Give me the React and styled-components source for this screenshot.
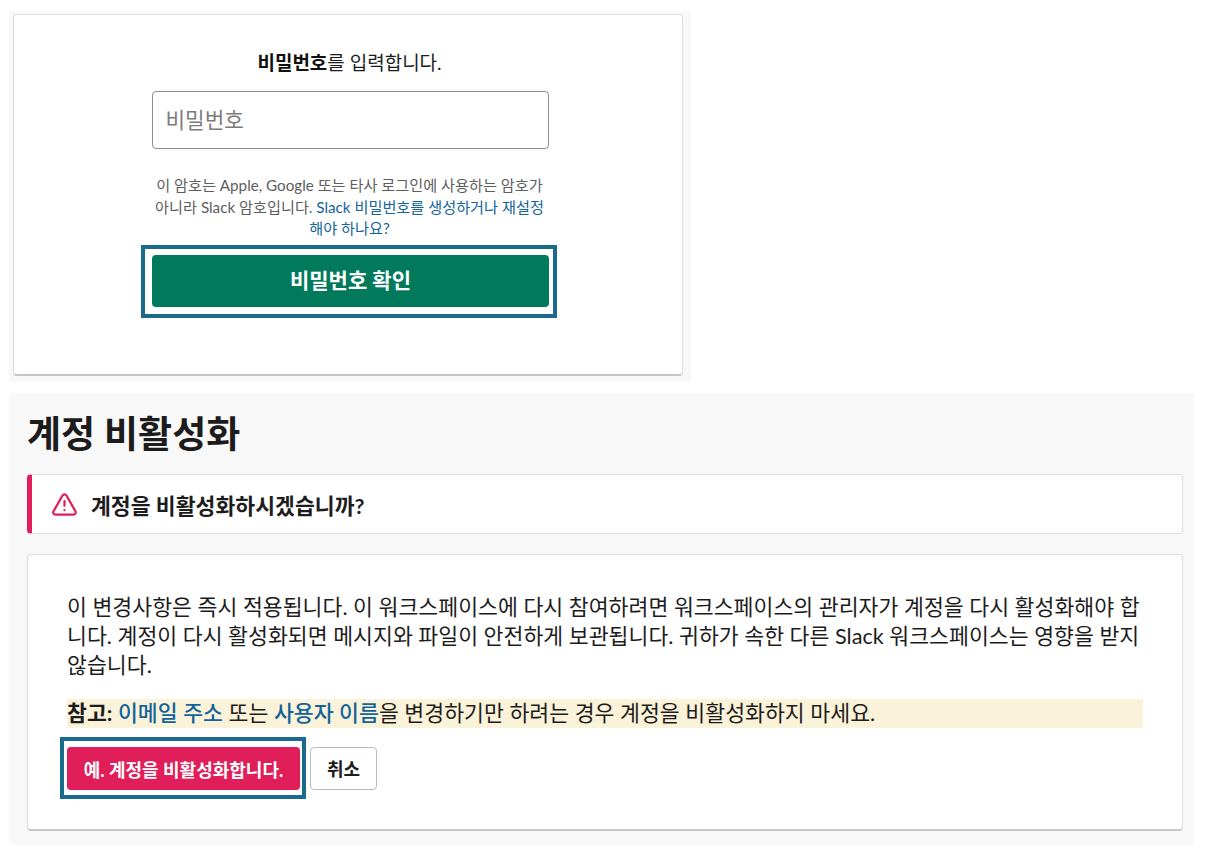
import React from 'react';
import styled, { createGlobalStyle } from 'styled-components';
import { TriangleAlert } from 'lucide-react';

const GlobalStyle = createGlobalStyle`
    body {
        margin: 0;
        background: #fff;
        font-family: 'Lato', 'Noto Sans CJK KR', sans-serif;
        color: #1d1c1d;
    }
`;

const Page = styled.div`
    width: 1208px;
    height: 855px;
    padding-top: 11px;
    padding-left: 9px;
    box-sizing: border-box;
    overflow: hidden;
`;

const TopPanel = styled.div`
    width: 682px;
    height: 371px;
    box-sizing: border-box;
    padding: 3px 8px 0 4px;
    background: #f8f8f8;
`;

const Card = styled.div`
    background: #fff;
    border: 1px solid #dddddd;
    border-bottom: 2px solid #c6c6c6;
    border-radius: 4px;
    box-sizing: border-box;
`;

const PasswordCard = styled(Card)`
    height: 362px;
    display: flex;
    flex-direction: column;
    align-items: center;
    padding-top: 35px;
`;

const Lead = styled.p`
    margin: 0 0 15px 3px;
    width: 396px;
    text-align: center;
    font-size: 19px;
    line-height: 26px;
    color: #1d1c1d;
    strong {
        font-weight: 700;
        color: #111;
    }
`;

const PasswordInput = styled.input`
    width: 397px;
    height: 58px;
    box-sizing: border-box;
    padding: 0 13px;
    margin-left: 4px;
    border: 1px solid #8f8f8f;
    border-radius: 4px;
    font-family: inherit;
    font-size: 21.3px;
    background: #fff;
    &::placeholder {
        color: #7c7c7c;
        opacity: 1;
    }
`;

const Help = styled.p`
    width: 420px;
    margin: 26px 0 5px 3px;
    text-align: center;
    font-size: 15.2px;
    line-height: 21.5px;
    color: #5e5d60;
    white-space: nowrap;
`;

const TextLink = styled.a`
    color: #12649b;
    text-decoration: none;
`;

const FocusRing = styled.div`
    display: ${props => (props.inline ? 'inline-flex' : 'flex')};
    border: 4px solid #1a6a8c;
    box-sizing: border-box;
    background: #fff;
    padding: ${props => props.pad};
    margin-left: ${props => props.shift || 0};
`;

const SubmitButton = styled.button`
    width: 397px;
    height: 52px;
    border: 0;
    border-radius: 4px;
    padding: 0 0 3px;
    background: #007a5a;
    color: #fff;
    font-family: inherit;
    font-size: 21px;
    font-weight: 700;
`;

const BottomPanel = styled.div`
    width: 1185px;
    height: 452px;
    margin-top: 11px;
    box-sizing: border-box;
    padding: 15px 11px 0 18px;
    background: #f8f8f8;
`;

const Title = styled.h1`
    margin: 0 0 14px;
    font-size: 37px;
    line-height: 52px;
    font-weight: 700;
    color: #1d1c1d;
`;

const Alert = styled.div`
    height: 60px;
    display: flex;
    align-items: center;
    gap: 13px;
    box-sizing: border-box;
    padding-left: 19px;
    background: #fff;
    border: 1px solid #dddddd;
    border-left: 5px solid #e01e5a;
    border-radius: 4px;
    font-size: 21.6px;
    font-weight: 700;
    color: #1d1c1d;
`;

const BodyCard = styled(Card)`
    height: 277px;
    margin-top: 20px;
    padding: 38px 39px 0;
`;

const BodyText = styled.p`
    margin: 0 0 19px;
    font-size: 21.65px;
    line-height: 29px;
    color: #1d1c1d;
    white-space: nowrap;
`;

const Note = styled.p`
    margin: 0;
    height: 29px;
    font-size: 21.65px;
    line-height: 29px;
    background: #fbf3d9;
    white-space: nowrap;
    strong {
        font-weight: 700;
    }
    a {
        font-weight: 500;
    }
`;

const Actions = styled.div`
    display: flex;
    align-items: center;
    gap: 4px;
    margin: 9px 0 0 -7px;
`;

const DangerButton = styled.button`
    width: 233px;
    height: 43px;
    border: 0;
    border-radius: 4px;
    background: #e01e5a;
    color: #fff;
    font-family: inherit;
    font-size: 18px;
    font-weight: 700;
    white-space: nowrap;
    padding: 0;
`;

const CancelButton = styled.button`
    width: 67px;
    height: 43px;
    border: 1px solid #bbbbbb;
    border-radius: 4px;
    background: #fff;
    color: #1d1c1d;
    font-family: inherit;
    font-size: 18px;
    font-weight: 700;
    padding: 0;
`;

const App = () => (
    <Page>
        <GlobalStyle />
        <TopPanel>
            <PasswordCard>
                <Lead>
                    <strong>비밀번호</strong>를 입력합니다.
                </Lead>
                <PasswordInput placeholder="비밀번호" />
                <Help>
                    이 암호는 Apple, Google 또는 타사 로그인에 사용하는 암호가
                    <br />
                    아니라 Slack 암호입니다.{' '}
                    <TextLink href="#">
                        Slack 비밀번호를 생성하거나 재설정
                        <br />
                        해야 하나요?
                    </TextLink>
                </Help>
                <FocusRing shift="2px" pad="6px 4px 7px 7px">
                    <SubmitButton>비밀번호 확인</SubmitButton>
                </FocusRing>
            </PasswordCard>
        </TopPanel>
        <BottomPanel>
            <Title>계정 비활성화</Title>
            <Alert>
                <TriangleAlert size={27} color="#e01e5a" strokeWidth={2} />
                계정을 비활성화하시겠습니까?
            </Alert>
            <BodyCard>
                <BodyText>
                    이 변경사항은 즉시 적용됩니다. 이 워크스페이스에 다시 참여하려면 워크스페이스의 관리자가 계정을 다시 활성화해야 합
                    <br />
                    니다. 계정이 다시 활성화되면 메시지와 파일이 안전하게 보관됩니다. 귀하가 속한 다른 Slack 워크스페이스는 영향을 받지
                    <br />
                    않습니다.
                </BodyText>
                <Note>
                    <strong>참고:</strong> <TextLink href="#">이메일 주소</TextLink> 또는{' '}
                    <TextLink href="#">사용자 이름</TextLink>을 변경하기만 하려는 경우 계정을 비활성화하지 마세요.
                </Note>
                <Actions>
                    <FocusRing inline pad="6px 2px 5px 3px">
                        <DangerButton>예. 계정을 비활성화합니다.</DangerButton>
                    </FocusRing>
                    <CancelButton>취소</CancelButton>
                </Actions>
            </BodyCard>
        </BottomPanel>
    </Page>
);

export default App;
